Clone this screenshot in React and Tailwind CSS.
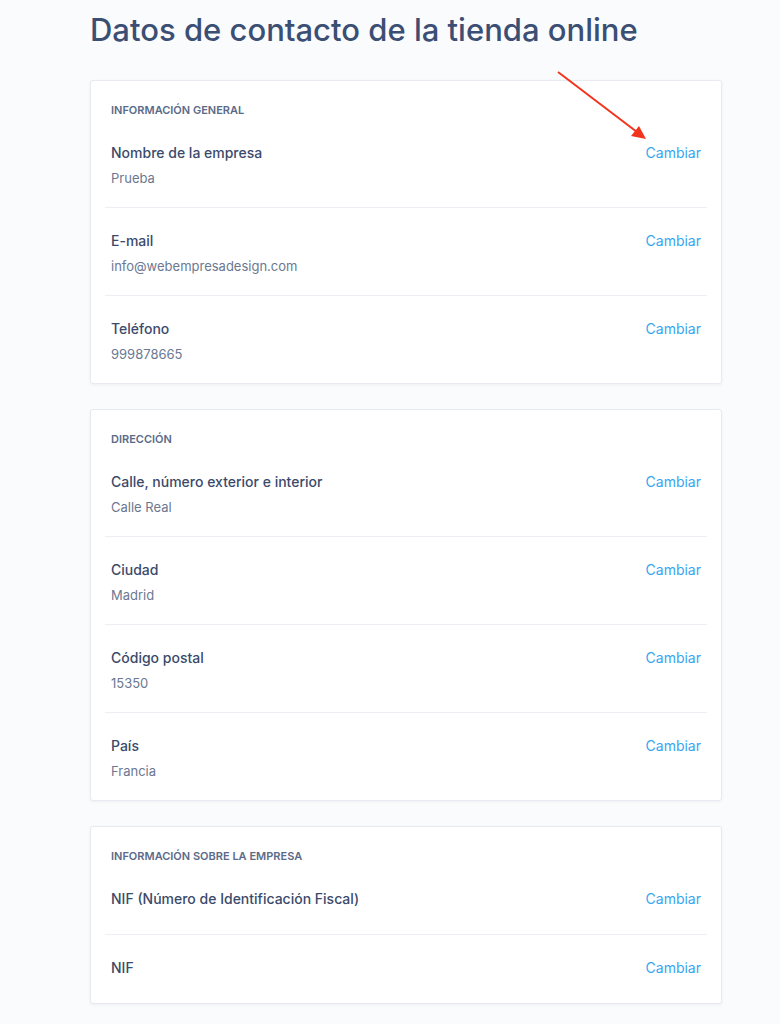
const sections = [
  {
    title: "Información general",
    rows: [
      { label: "Nombre de la empresa", value: "Prueba" },
      { label: "E-mail", value: "info@webempresadesign.com" },
      { label: "Teléfono", value: "999878665" }
    ]
  },
  {
    title: "Dirección",
    rows: [
      { label: "Calle, número exterior e interior", value: "Calle Real" },
      { label: "Ciudad", value: "Madrid" },
      { label: "Código postal", value: "15350" },
      { label: "País", value: "Francia" }
    ]
  },
  {
    title: "Información sobre la empresa",
    rows: [
      { label: "NIF (Número de Identificación Fiscal)" },
      { label: "NIF" }
    ]
  }
];

function Row({ label, value, last }) {
  return (
    <div
      className={`flex items-start justify-between px-[6px] ${
        value ? "pt-[23px] pb-[19px]" : "pt-[23px] pb-[25px]"
      } ${last ? "" : "border-b border-[#eceff3]"}`}
    >
      <div className="flex flex-col gap-[5px]">
        <span className="text-[14px] leading-5 font-medium text-[#3b4a6b]">{label}</span>
        {value && <span className="text-[13px] leading-5 text-[#6b7891]">{value}</span>}
      </div>
      <button className="text-[14px] leading-5 text-[#37a6f0]">Cambiar</button>
    </div>
  );
}

function Card({ title, rows }) {
  return (
    <div className="bg-white border border-[#e7ebf1] rounded-[3px] shadow-[0_1px_3px_rgba(30,50,90,0.06)] px-[14px] pt-[22px]">
      <h2 className="px-[6px] mb-[3px] text-[11px] leading-[14px] font-semibold uppercase text-[#5b6a88]">
        {title}
      </h2>
      {rows.map((r, i) => (
        <Row key={r.label} {...r} last={i === rows.length - 1} />
      ))}
    </div>
  );
}

export default function App() {
  return (
    <div
      className="relative min-h-[1024px] bg-[#fafbfc] pl-[90px] pt-[12px]"
      style={{ fontFamily: "Inter, 'Noto Sans', sans-serif" }}
    >
      <h1 className="text-[31px] leading-9 font-medium text-[#3b4e74] mb-[32px]">
        Datos de contacto de la tienda online
      </h1>

      <div className="w-[632px] flex flex-col gap-[25px]">
        {sections.map(s => (
          <Card key={s.title} {...s} />
        ))}
      </div>

      {/* red arrow annotation */}
      <svg className="absolute left-0 top-0 pointer-events-none" width="780" height="160">
        <line x1="558" y1="72" x2="637" y2="132" stroke="#f2341d" strokeWidth="2" />
        <polygon points="646,139 631,136 639,126" fill="#f2341d" />
      </svg>
    </div>
  );
}
